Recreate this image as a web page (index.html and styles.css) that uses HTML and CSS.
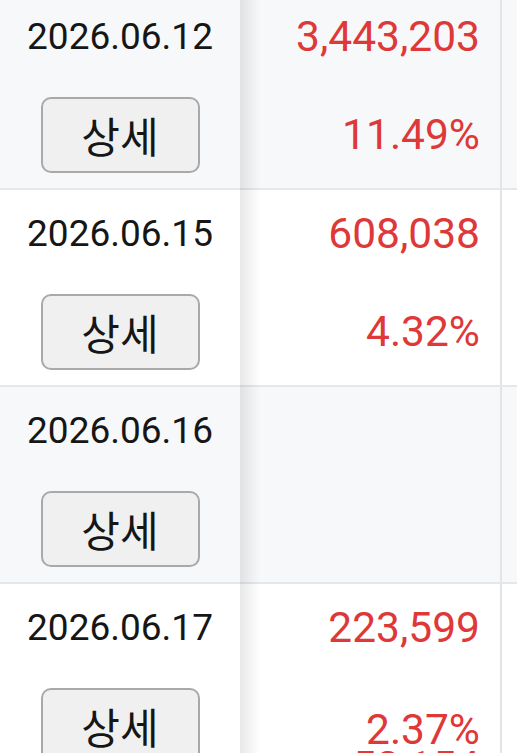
FILE: index.html
```html
<!DOCTYPE html>
<html lang="ko">

<head>
    <meta charset="UTF-8">
    <meta name="viewport" content="width=device-width, initial-scale=1.0">
    <title>일별 내역</title>
    <link rel="stylesheet" href="styles.css">
</head>

<body>
    <div class="table">
        <div class="row stripe">
            <div class="cell date-cell">
                <div class="date">2026.06.12</div>
                <button class="detail-btn">상세</button>
            </div>
            <div class="cell value-cell">
                <div class="amount">3,443,203</div>
                <div class="rate">11.49%</div>
            </div>
            <div class="cell rest-cell"></div>
        </div>

        <div class="row">
            <div class="cell date-cell">
                <div class="date">2026.06.15</div>
                <button class="detail-btn">상세</button>
            </div>
            <div class="cell value-cell">
                <div class="amount">608,038</div>
                <div class="rate">4.32%</div>
            </div>
            <div class="cell rest-cell"></div>
        </div>

        <div class="row stripe">
            <div class="cell date-cell">
                <div class="date">2026.06.16</div>
                <button class="detail-btn">상세</button>
            </div>
            <div class="cell value-cell">
                <div class="amount"></div>
                <div class="rate"></div>
            </div>
            <div class="cell rest-cell"></div>
        </div>

        <div class="row">
            <div class="cell date-cell">
                <div class="date">2026.06.17</div>
                <button class="detail-btn">상세</button>
            </div>
            <div class="cell value-cell">
                <div class="amount">223,599</div>
                <div class="rate rate-stack">
                    <span>2.37%</span>
                    <span>52,154</span>
                </div>
            </div>
            <div class="cell rest-cell"></div>
        </div>
    </div>
</body>

</html>
```

FILE: styles.css
```css
body {
    margin: 0;
    background-color: #ffffff;
    font-family: Roboto, "Noto Sans", Arial, sans-serif;
    overflow: hidden;
}

.table {
    margin-top: -7px;
}

.row {
    display: grid;
    grid-template-columns: 240px 262px 1fr;
    border-bottom: 2px solid #e6e7e9;
    background-color: #ffffff;
}

.row.stripe {
    background-color: #f7f8fa;
}

.cell {
    display: grid;
    grid-template-rows: 86px 75px;
    row-gap: 18px;
    padding-bottom: 16px;
    align-items: center;
}

.date-cell {
    position: relative;
    justify-items: center;
}

/* fixed column shadow */
.date-cell::after {
    content: "";
    position: absolute;
    top: 0;
    bottom: -2px;
    right: -20px;
    width: 20px;
    background: linear-gradient(to right, rgba(0, 0, 0, 0.09), rgba(0, 0, 0, 0));
    z-index: 1;
}

.date {
    font-size: 37px;
    color: #161616;
}

.detail-btn {
    width: 159px;
    height: 76px;
    padding: 0;
    border: 2px solid #a9a9a9;
    border-radius: 10px;
    background-color: #f0f0f0;
    color: #161616;
    font-family: "Noto Sans CJK KR", "Noto Sans", sans-serif;
    font-size: 42px;
    line-height: 1;
}

.value-cell {
    justify-items: end;
    padding-right: 20px;
    border-right: 2px solid #e3e4e6;
}

.amount,
.rate {
    font-size: 42.5px;
    color: #de3838;
}

.rate-stack {
    display: flex;
    flex-direction: column;
    align-items: flex-end;
    align-self: start;
    margin-top: 23px;
    line-height: 37px;
}
```
